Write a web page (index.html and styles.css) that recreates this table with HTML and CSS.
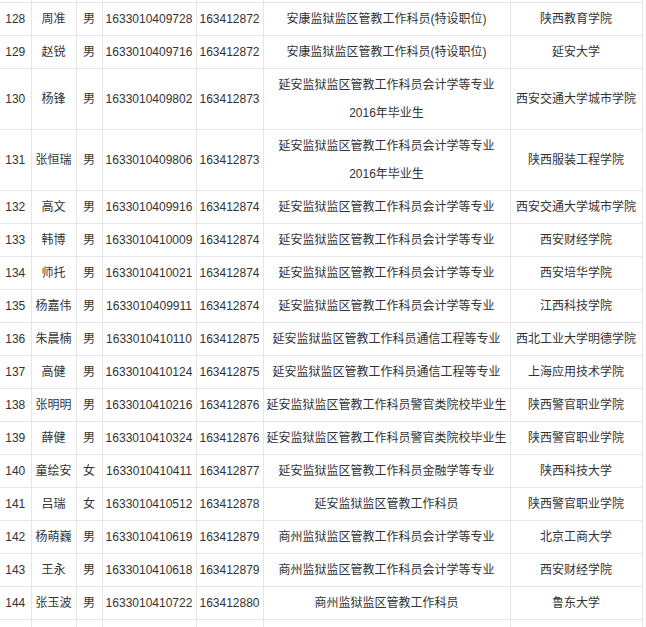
FILE: index.html
```html
<!DOCTYPE html>
<html lang="zh-CN">
<head>
<meta charset="utf-8">
<title>名单</title>
<link rel="stylesheet" href="styles.css">
</head>
<body>
<table class="list">
<colgroup>
<col class="c-no"><col class="c-name"><col class="c-sex"><col class="c-id"><col class="c-pos"><col class="c-job"><col class="c-school">
</colgroup>
<tbody>
<tr class="stub"><td></td><td></td><td></td><td></td><td></td><td></td><td></td></tr>
<tr><td>128</td><td>周准</td><td>男</td><td>1633010409728</td><td>163412872</td><td>安康监狱监区管教工作科员(特设职位)</td><td>陕西教育学院</td></tr>
<tr><td>129</td><td>赵锐</td><td>男</td><td>1633010409716</td><td>163412872</td><td>安康监狱监区管教工作科员(特设职位)</td><td>延安大学</td></tr>
<tr><td>130</td><td>杨锋</td><td>男</td><td>1633010409802</td><td>163412873</td><td>延安监狱监区管教工作科员会计学等专业<br>2016年毕业生</td><td>西安交通大学城市学院</td></tr>
<tr><td>131</td><td>张恒瑞</td><td>男</td><td>1633010409806</td><td>163412873</td><td>延安监狱监区管教工作科员会计学等专业<br>2016年毕业生</td><td>陕西服装工程学院</td></tr>
<tr><td>132</td><td>高文</td><td>男</td><td>1633010409916</td><td>163412874</td><td>延安监狱监区管教工作科员会计学等专业</td><td>西安交通大学城市学院</td></tr>
<tr><td>133</td><td>韩博</td><td>男</td><td>1633010410009</td><td>163412874</td><td>延安监狱监区管教工作科员会计学等专业</td><td>西安财经学院</td></tr>
<tr><td>134</td><td>师托</td><td>男</td><td>1633010410021</td><td>163412874</td><td>延安监狱监区管教工作科员会计学等专业</td><td>西安培华学院</td></tr>
<tr><td>135</td><td>杨嘉伟</td><td>男</td><td>1633010409911</td><td>163412874</td><td>延安监狱监区管教工作科员会计学等专业</td><td>江西科技学院</td></tr>
<tr><td>136</td><td>朱晨楠</td><td>男</td><td>1633010410110</td><td>163412875</td><td>延安监狱监区管教工作科员通信工程等专业</td><td>西北工业大学明德学院</td></tr>
<tr><td>137</td><td>高健</td><td>男</td><td>1633010410124</td><td>163412875</td><td>延安监狱监区管教工作科员通信工程等专业</td><td>上海应用技术学院</td></tr>
<tr><td>138</td><td>张明明</td><td>男</td><td>1633010410216</td><td>163412876</td><td>延安监狱监区管教工作科员警官类院校毕业生</td><td>陕西警官职业学院</td></tr>
<tr><td>139</td><td>薛健</td><td>男</td><td>1633010410324</td><td>163412876</td><td>延安监狱监区管教工作科员警官类院校毕业生</td><td>陕西警官职业学院</td></tr>
<tr><td>140</td><td>童绘安</td><td>女</td><td>1633010410411</td><td>163412877</td><td>延安监狱监区管教工作科员金融学等专业</td><td>陕西科技大学</td></tr>
<tr><td>141</td><td>吕瑞</td><td>女</td><td>1633010410512</td><td>163412878</td><td>延安监狱监区管教工作科员</td><td>陕西警官职业学院</td></tr>
<tr><td>142</td><td>杨萌巍</td><td>男</td><td>1633010410619</td><td>163412879</td><td>商州监狱监区管教工作科员会计学等专业</td><td>北京工商大学</td></tr>
<tr><td>143</td><td>王永</td><td>男</td><td>1633010410618</td><td>163412879</td><td>商州监狱监区管教工作科员会计学等专业</td><td>西安财经学院</td></tr>
<tr><td>144</td><td>张玉波</td><td>男</td><td>1633010410722</td><td>163412880</td><td>商州监狱监区管教工作科员</td><td>鲁东大学</td></tr>
<tr class="tail"><td></td><td></td><td></td><td></td><td></td><td></td><td></td></tr>
</tbody>
</table>
</body>
</html>
```

FILE: styles.css
```css
html, body {
  margin: 0;
  padding: 0;
  background: #fff;
}

.list {
  border-collapse: collapse;
  table-layout: fixed;
  width: 642px;
  font-family: "Liberation Sans", "Noto Sans CJK SC", sans-serif;
  font-size: 12px;
  color: #333;
}

.c-no { width: 31px; }
.c-name { width: 45px; }
.c-sex { width: 26px; }
.c-id { width: 94px; }
.c-pos { width: 67px; }
.c-job { width: 247px; }
.c-school { width: 132px; }

.list td {
  border: 1px solid #e6e6e6;
  padding: 2px 0;
  line-height: 28px;
  text-align: center;
  vertical-align: middle;
  white-space: nowrap;
  overflow: hidden;
}

.list td:first-child {
  border-left: none;
}

.list tr.stub td {
  border-top: none;
  height: 2px;
  padding: 0;
  line-height: 0;
}

.list tr.tail td {
  height: 28px;
}
```
